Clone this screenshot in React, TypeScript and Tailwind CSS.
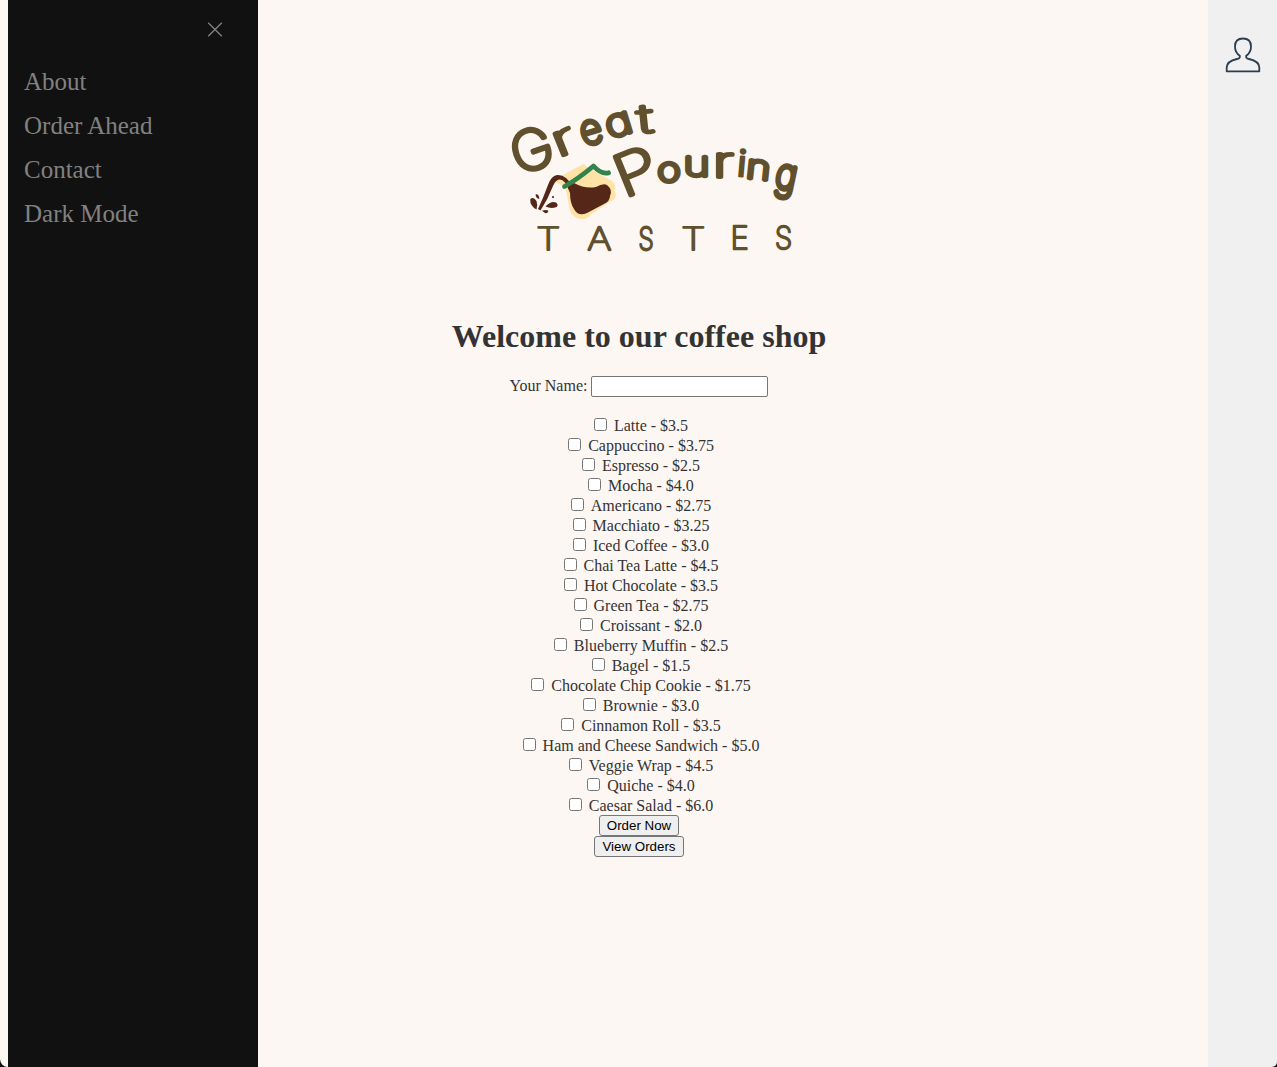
import React from "react";

const links = ["About", "Order Ahead", "Contact", "Dark Mode"];

const menu = [
  "Latte - $3.5",
  "Cappuccino - $3.75",
  "Espresso - $2.5",
  "Mocha - $4.0",
  "Americano - $2.75",
  "Macchiato - $3.25",
  "Iced Coffee - $3.0",
  "Chai Tea Latte - $4.5",
  "Hot Chocolate - $3.5",
  "Green Tea - $2.75",
  "Croissant - $2.0",
  "Blueberry Muffin - $2.5",
  "Bagel - $1.5",
  "Chocolate Chip Cookie - $1.75",
  "Brownie - $3.0",
  "Cinnamon Roll - $3.5",
  "Ham and Cheese Sandwich - $5.0",
  "Veggie Wrap - $4.5",
  "Quiche - $4.0",
  "Caesar Salad - $6.0",
];

type Letter = {
  ch: string;
  // centre of the letter
  x: number;
  y: number;
  size: number;
  // distance from the centre down to the baseline
  drop: number;
  rot?: number;
  sx?: number;
  weight?: number;
  pen?: number;
};

const great: Letter[] = [
  { ch: "G", x: 32.6, y: 54.5, size: 54, drop: 19.6, rot: -19, sx: 1.04 },
  { ch: "r", x: 65, y: 47.5, size: 43, drop: 11.8, rot: -22, sx: 1.55 },
  { ch: "e", x: 92.3, y: 37.3, size: 41, drop: 11.2, rot: -17, sx: 0.92 },
  { ch: "a", x: 120, y: 30, size: 38, drop: 10.3, rot: -17, sx: 1.2 },
  { ch: "t", x: 146, y: 24.5, size: 39, drop: 13, rot: -6, sx: 1.6 },
];

const pouring: Letter[] = [
  { ch: "P", x: 136.5, y: 76, size: 57, drop: 20.5, rot: -22, sx: 1.22 },
  { ch: "o", x: 170, y: 77, size: 33, drop: 9, sx: 1.2 },
  { ch: "u", x: 197.5, y: 72, size: 34, drop: 9, sx: 1.32 },
  { ch: "r", x: 224, y: 71, size: 41, drop: 11, sx: 1.55 },
  { ch: "i", x: 243, y: 68.5, size: 36, drop: 13, rot: 5, weight: 400, pen: 2.2 },
  { ch: "n", x: 259.5, y: 75, size: 33, drop: 9, rot: 6, sx: 1.25 },
  { ch: "g", x: 286.3, y: 86.7, size: 42, drop: 7.5, rot: 12, sx: 0.86 },
];

const tastes: Letter[] = [
  { ch: "T", x: 49.4, y: 143.3, size: 31, drop: 11.2, sx: 1.26 },
  { ch: "A", x: 100.5, y: 143.3, size: 31, drop: 11.2, sx: 1.2 },
  { ch: "S", x: 147.2, y: 143.3, size: 31, drop: 11.2, sx: 0.8 },
  { ch: "T", x: 194.2, y: 143.3, size: 31, drop: 11.2, sx: 1.26 },
  { ch: "E", x: 240.6, y: 142.8, size: 31, drop: 11.2, sx: 1 },
  { ch: "S", x: 284.5, y: 143, size: 31, drop: 11.2, sx: 0.9 },
];

function Word({ letters, pen }: { letters: Letter[]; pen: number }) {
  return (
    <g
      fill="#60502d"
      stroke="#60502d"
      strokeLinejoin="round"
      strokeLinecap="round"
      textAnchor="middle"
    >
      {letters.map((l, i) => (
        <text
          key={i}
          y={l.drop}
          transform={`translate(${l.x} ${l.y}) rotate(${l.rot ?? 0}) scale(${l.sx ?? 1} 1)`}
          fontSize={l.size}
          fontWeight={l.weight ?? 100}
          strokeWidth={l.pen ?? pen}
          style={{ vectorEffect: "non-scaling-stroke" }}
        >
          {l.ch}
        </text>
      ))}
    </g>
  );
}

function Logo() {
  return (
    <svg
      width="310"
      height="175"
      viewBox="0 0 310 175"
      className="ml-[29px] block shrink-0 overflow-visible font-['Inter',sans-serif] [font-feature-settings:'cv11'_1]"
      role="img"
      aria-label="Great Pouring Tastes"
    >
      <Word letters={great} pen={5} />
      {/* carafe glass */}
      <path
        d="M83.500 69.500 Q86 68 87.500 72 L113 86 Q117.500 90 115.500 96 Q118 100 115.500 104 L92 119 Q88 125 82 124 Q74.500 123 71 116 L67.500 98 Q67 91 58 88 Q55 86 60 82 Z"
        fill="#ffe2a6"
      />
      {/* coffee */}
      <path
        d="M68 91 L75 88 Q86 94 97 92 Q104 88 108 90 Q114 95 111 101 Q111 106 105 109 L88 118 Q79 122 75 114 Q71 108 71 98 Z"
        fill="#542719"
      />
      <path
        d="M74 92 Q67 79 58 80 Q52 81 49 90 Q45 101 39 114 L41.500 115.500 Q49 104 54 91 Q57 84 61 84.500 Q66 85 70 94 Z"
        fill="#542719"
      />
      <path
        d="M65.500 91.500 Q79 84 94.500 71 Q102 79.500 109.500 77.800"
        fill="none"
        stroke="#33834b"
        strokeWidth="4.800"
        strokeLinecap="round"
        strokeLinejoin="round"
      />
      {/* splashes */}
      <g fill="#542719">
        <path d="M31.200 104.500 Q34 101 37.500 106 Q39 110 37.500 114.500 Q31 111 31.200 104.500 Z" />
        <path d="M36.500 99.500 Q40 98.500 40.300 104 Q37 103.500 36.500 99.500 Z" />
        <path d="M46.500 111.500 Q52 105.500 57 107.500 Q60 110 57.500 112 Q52 114 46.500 111.500 Z" />
        <path d="M43 115.700 Q47 114.300 49.500 115.800 Q49 118.800 46 118 Z" />
        <circle cx="54" cy="102" r="1.100" />
      </g>
      <Word letters={pouring} pen={5} />
      <Word letters={tastes} pen={2.5} />
    </svg>
  );
}

export default function App() {
  return (
    <div className="flex h-[1067px] w-[1277px] overflow-hidden bg-[#111] font-['Liberation_Serif',serif] text-[#333]">
      <div className="w-2 shrink-0 rounded-bl-lg bg-[#fdf7f3]" />
      <aside className="flex w-[250px] shrink-0 flex-col bg-[#111] text-[#818181]">
        <div className="flex h-[60px] shrink-0 justify-end pt-[22px] pr-[35px]">
          <svg width="16" height="16" viewBox="0 0 16 16" fill="none" stroke="currentColor" strokeWidth="1.3" aria-label="Close">
            <path d="M1.200 0.700 L14.800 14.300 M14.800 0.700 L1.200 14.300" />
          </svg>
        </div>
        <nav className="flex flex-col">
          {links.map((l) => (
            <a key={l} href="#" className="h-11 pl-4 text-[25px] leading-[44px]">
              {l}
            </a>
          ))}
        </nav>
      </aside>
      <main className="flex w-[950px] shrink-0 flex-col items-center bg-[#fdf7f3] pt-[95px] pr-[188px]">
        <Logo />
        <h1 className="mt-[48px] text-[32px] leading-[36px] font-bold whitespace-nowrap">Welcome to our coffee shop</h1>
        <label className="mt-[22px] flex h-[21px] items-center gap-1 text-base leading-5">
          <span className="-mt-0.5">Your Name:</span>
          <input className="h-[21px] w-[177px] rounded-[2px] border border-[#767676] bg-white px-0.5 font-['Liberation_Sans',sans-serif] text-[13.333px]" />
        </label>
        <div className="mt-[18px] flex flex-col items-center">
          {menu.map((m) => (
            <label key={m} className="flex h-5 pl-1 text-base leading-[22px] whitespace-nowrap">
              <input type="checkbox" className="mt-[3px] mr-[7px] size-[13px]" />
              {m}
            </label>
          ))}
        </div>
        <button className="h-[21px] w-20 rounded-[3px] border border-[#767676] bg-[#efefef] font-['Liberation_Sans',sans-serif] text-[13.333px] leading-[15px] text-black">
          Order Now
        </button>
        <button className="h-[21px] w-[90px] rounded-[3px] border border-[#767676] bg-[#efefef] font-['Liberation_Sans',sans-serif] text-[13.333px] leading-[15px] text-black">
          View Orders
        </button>
      </main>
      <div className="w-[69px] shrink-0 rounded-br-[5px] bg-[#f0f0f0] pt-[37px] pl-[17px]">
        <svg width="36" height="36" viewBox="0 0 36 36" fill="none" stroke="#2c3e50" strokeWidth="1.8" strokeLinejoin="round" aria-label="Account">
          <path d="M14.800 20 V18.800 Q10 15.500 10 9.500 C10 4 13.500 1.500 18 1.500 C22.500 1.500 26 4 26 9.500 Q26 15.500 21.200 18.800 V20 Q21.200 21.500 24 22 C30.500 23.500 34.300 25.500 34.300 30.500 V34.300 H1.700 V30.500 C1.700 25.500 5.500 23.500 12 22 Q14.800 21.500 14.800 20 Z" />
        </svg>
      </div>
    </div>
  );
}
